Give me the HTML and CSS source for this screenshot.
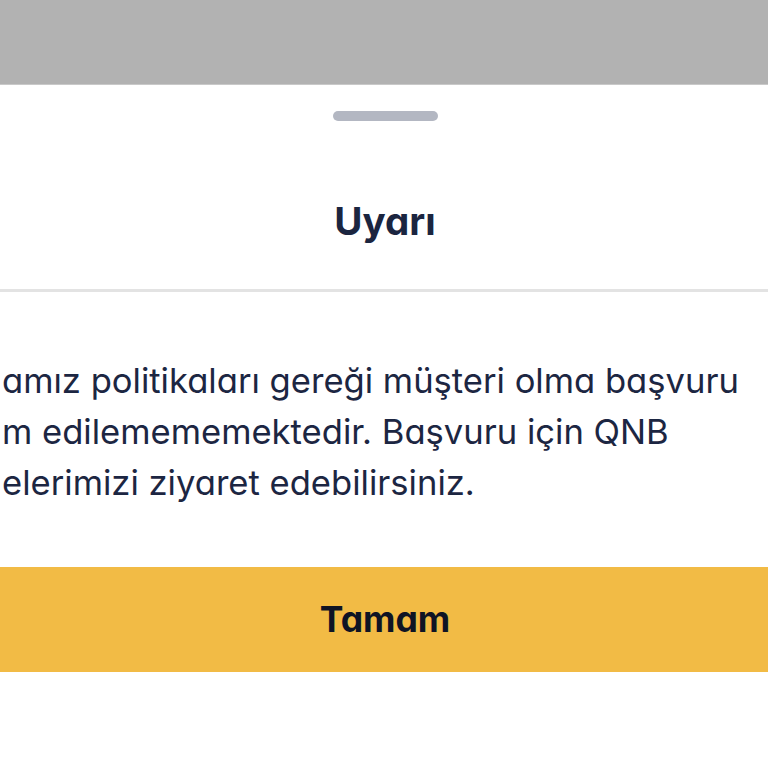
FILE: index.html
```html
<!DOCTYPE html>
<html lang="tr">
<head>
<meta charset="utf-8">
<title>Uyarı</title>
<link rel="stylesheet" href="styles.css">
</head>
<body>
<div class="overlay"></div>
<div class="sheet">
  <div class="handle"></div>
  <h1 class="title">Uyarı</h1>
  <div class="divider"></div>
  <p class="message">amız politikaları gereği müşteri olma başvuru<br>m edilemememektedir. Başvuru için QNB<br>elerimizi ziyaret edebilirsiniz.</p>
  <button class="primary">Tamam</button>
</div>
</body>
</html>
```
FILE: styles.css
```css
html, body {
  margin: 0;
  padding: 0;
  background: #ffffff;
}
body {
  width: 768px;
  height: 768px;
  overflow: hidden;
  font-family: Inter, "Noto Sans", sans-serif;
  font-feature-settings: "cv11" 1;
}
.overlay {
  height: 84px;
  background: #b2b2b2;
  border-bottom: 1px solid #c9c9c9;
}
.sheet {
  display: flex;
  flex-direction: column;
  align-items: stretch;
  background: #ffffff;
}
.handle {
  align-self: center;
  margin: 26px 0 0 2px;
  width: 105px;
  height: 10px;
  border-radius: 5px;
  background: #b3b7c2;
}
.title {
  margin: 76px 0 0 2px;
  text-align: center;
  font-size: 38.5px;
  line-height: 48px;
  font-weight: 700;
  color: #1b2540;
}
.divider {
  margin-top: 44px;
  height: 3px;
  background: #e3e3e3;
}
.message {
  margin: 63px 0 0 0;
  padding-left: 2px;
  white-space: nowrap;
  overflow: hidden;
  font-size: 34.6px;
  line-height: 51px;
  font-weight: 400;
  color: #1c2642;
}
.primary {
  margin-top: 59px;
  height: 105px;
  border: none;
  background: #f2bb45;
  font-family: inherit;
  font-feature-settings: "cv11" 1;
  font-size: 35.5px;
  font-weight: 700;
  color: #0f1424;
  padding: 0 0 0 2px;
}
```
